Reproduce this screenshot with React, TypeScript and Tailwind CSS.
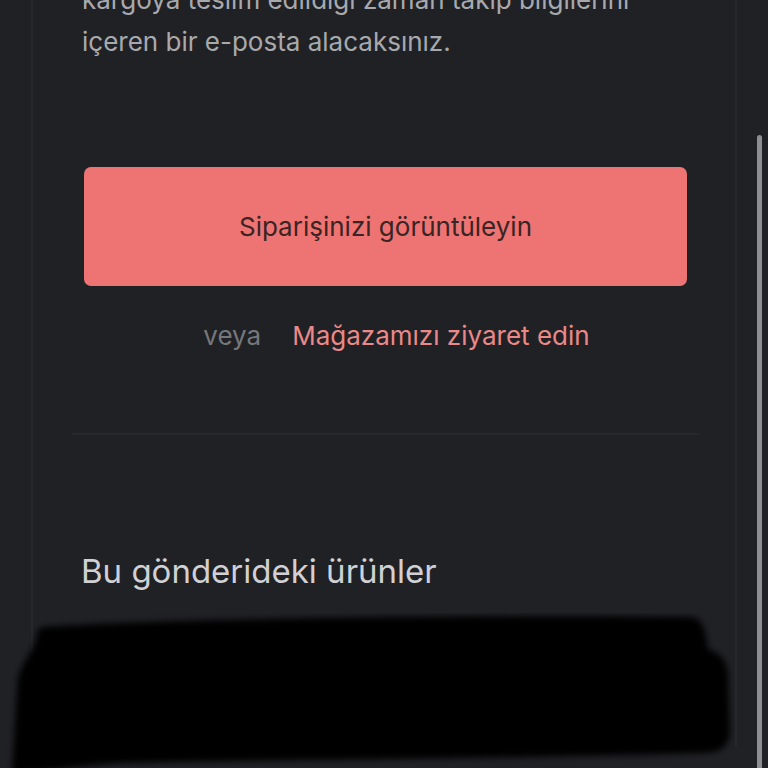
import React from "react";

export default function App() {
  return (
    <div
      className="relative h-[768px] w-[768px] overflow-hidden bg-[#202125]"
      style={{ fontFamily: "Inter, Roboto, 'Noto Sans', sans-serif" }}
    >
      <div className="mx-[31px] h-full border-x-2 border-[#27282c]">
        <div className="pl-[51px] pr-[48px]">
          <p className="-mt-[21px] -ml-[2px] text-[26px] leading-[42px] text-[#a8a9ad]">
            kargoya teslim edildiği zaman takip bilgilerini
            <br />
            içeren bir e-posta alacaksınız.
          </p>

          <button className="mt-[104px] flex h-[119px] w-full items-center justify-center rounded-[7px] bg-[#ed7473] text-[26px] text-[#3a2424]">
            Siparişinizi görüntüleyin
          </button>

          <div className="mt-[33px] flex h-[34px] items-center justify-center gap-[31px] pl-[22px] text-[26px] leading-[34px]">
            <span className="text-[#76777b]">veya</span>
            <span className="text-[#ea8987]">Mağazamızı ziyaret edin</span>
          </div>

          <div className="-mx-[12px] mt-[80px] h-[2px] bg-[#27282c]" />

          <h2 className="-ml-[3px] mt-[116px] text-[33px] leading-[40px] text-[#d1d1d5]">
            Bu gönderideki ürünler
          </h2>
        </div>

        <div className="-ml-[31px] mt-[22px] h-[160px] w-[768px]">
          <svg width="768" height="160" viewBox="0 0 768 160">
            <defs>
              <filter id="bl" x="-10%" y="-10%" width="120%" height="120%">
                <feGaussianBlur stdDeviation="3" />
              </filter>
            </defs>
            <path
              d="M40 14 C 200 4, 500 2, 690 4 C 702 6, 704 20, 706 36 C 716 40, 724 44, 726 60 L 728 120 C 726 136, 716 140, 700 140 C 500 146, 300 146, 120 150 C 80 152, 40 160, 20 160 L 10 160 C 12 130, 14 90, 16 64 C 20 50, 30 40, 34 26 C 35 18, 37 15, 40 14 Z"
              fill="#020202"
              filter="url(#bl)"
            />
          </svg>
        </div>
      </div>

      <div className="absolute left-[757px] top-[135px] h-[640px] w-[5px] rounded-full bg-[#8d8d92]" />
    </div>
  );
}
